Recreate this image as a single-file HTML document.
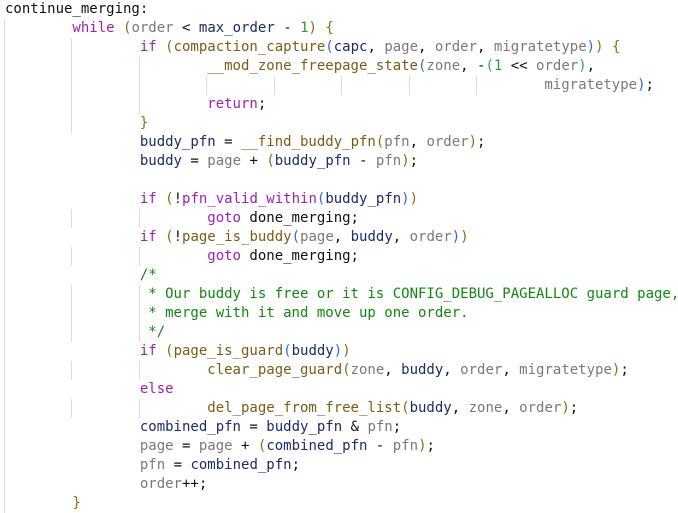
<!DOCTYPE html>
<html><head><meta charset="utf-8"><style>
html,body{margin:0;padding:0;background:#fff;width:678px;height:512px;overflow:hidden}
.code{position:absolute;left:5px;top:0;font-family:"DejaVu Sans Mono","Liberation Mono",monospace;font-size:14px;line-height:19px;color:#111}
.l{height:19px;white-space:pre}
.t{display:inline-block;width:8ch;height:19px;vertical-align:top;border-left:1px solid #dcdcdc;box-sizing:border-box;margin-left:-1px;margin-right:1px}
.s{display:inline-block;width:8ch;height:19px;vertical-align:top}
.g{display:inline-block;height:19px;vertical-align:top;border-left:1px solid #dcdcdc;margin-left:-1px}
.k{color:#a020b8}.f{color:#7d5c16}.v{color:#1c2b6b}.p{color:#7a7a7a}.n{color:#2e9c2e}.c{color:#118811}
.b1{color:#8a7010}.b2{color:#2b6fd6}.b3{color:#2aa198}.m{color:#a020b8}
</style></head><body><div class="code"><div class="l">continue_merging:</div><div class="l"><span class="t"></span><span class="k">while</span> <span class="b1">(</span><span class="p">order</span> &lt; <span class="v">max_order</span> - <span class="n">1</span><span class="b1">)</span> <span class="b1">{</span></div><div class="l"><span class="t"></span><span class="t"></span><span class="k">if</span> <span class="b1">(</span><span class="f">compaction_capture</span><span class="b2">(</span><span class="v">capc</span>, <span class="p">page</span>, <span class="p">order</span>, <span class="p">migratetype</span><span class="b2">)</span><span class="b1">)</span> <span class="b1">{</span></div><div class="l"><span class="t"></span><span class="t"></span><span class="t"></span><span class="f">__mod_zone_freepage_state</span><span class="b2">(</span><span class="p">zone</span>, -<span class="b3">(</span><span class="n">1</span> &lt;&lt; <span class="p">order</span><span class="b3">)</span>,</div><div class="l"><span class="t"></span><span class="t"></span><span class="t"></span><span class="t"></span><span class="t"></span><span class="t"></span><span class="t"></span><span class="t"></span><span class="p">migratetype</span><span class="b2">)</span>;</div><div class="l"><span class="t"></span><span class="t"></span><span class="t"></span><span class="k">return</span>;</div><div class="l"><span class="t"></span><span class="t"></span><span class="b1">}</span></div><div class="l"><span class="t"></span><span class="s"></span><span class="v">buddy_pfn</span> = <span class="f">__find_buddy_pfn</span><span class="b1">(</span><span class="p">pfn</span>, <span class="p">order</span><span class="b1">)</span>;</div><div class="l"><span class="t"></span><span class="s"></span><span class="v">buddy</span> = <span class="p">page</span> + <span class="b1">(</span><span class="v">buddy_pfn</span> - <span class="p">pfn</span><span class="b1">)</span>;</div><div class="l"><span class="t"></span></div><div class="l"><span class="t"></span><span class="s"></span><span class="k">if</span> <span class="b1">(</span>!<span class="m">pfn_valid_within</span><span class="b2">(</span><span class="v">buddy_pfn</span><span class="b2">)</span><span class="b1">)</span></div><div class="l"><span class="t"></span><span class="t"></span><span class="t"></span><span class="k">goto</span> done_merging;</div><div class="l"><span class="t"></span><span class="s"></span><span class="k">if</span> <span class="b1">(</span>!<span class="f">page_is_buddy</span><span class="b2">(</span><span class="p">page</span>, <span class="v">buddy</span>, <span class="p">order</span><span class="b2">)</span><span class="b1">)</span></div><div class="l"><span class="t"></span><span class="t"></span><span class="t"></span><span class="k">goto</span> done_merging;</div><div class="l"><span class="t"></span><span class="s"></span><span class="c">/*</span></div><div class="l"><span class="t"></span><span class="t"></span><span class="g"><span class="c"> * Our buddy is free or it is CONFIG_DEBUG_PAGEALLOC guard page,</span></span></div><div class="l"><span class="t"></span><span class="t"></span><span class="g"><span class="c"> * merge with it and move up one order.</span></span></div><div class="l"><span class="t"></span><span class="t"></span><span class="g"><span class="c"> */</span></span></div><div class="l"><span class="t"></span><span class="s"></span><span class="k">if</span> <span class="b1">(</span><span class="f">page_is_guard</span><span class="b2">(</span><span class="v">buddy</span><span class="b2">)</span><span class="b1">)</span></div><div class="l"><span class="t"></span><span class="t"></span><span class="t"></span><span class="f">clear_page_guard</span><span class="b1">(</span><span class="p">zone</span>, <span class="v">buddy</span>, <span class="p">order</span>, <span class="p">migratetype</span><span class="b1">)</span>;</div><div class="l"><span class="t"></span><span class="s"></span><span class="k">else</span></div><div class="l"><span class="t"></span><span class="t"></span><span class="t"></span><span class="f">del_page_from_free_list</span><span class="b1">(</span><span class="v">buddy</span>, <span class="p">zone</span>, <span class="p">order</span><span class="b1">)</span>;</div><div class="l"><span class="t"></span><span class="s"></span><span class="v">combined_pfn</span> = <span class="v">buddy_pfn</span> &amp; <span class="p">pfn</span>;</div><div class="l"><span class="t"></span><span class="s"></span><span class="p">page</span> = <span class="p">page</span> + <span class="b1">(</span><span class="v">combined_pfn</span> - <span class="p">pfn</span><span class="b1">)</span>;</div><div class="l"><span class="t"></span><span class="s"></span><span class="p">pfn</span> = <span class="v">combined_pfn</span>;</div><div class="l"><span class="t"></span><span class="s"></span><span class="p">order</span>++;</div><div class="l"><span class="t"></span><span class="b1">}</span></div></div></body></html>
